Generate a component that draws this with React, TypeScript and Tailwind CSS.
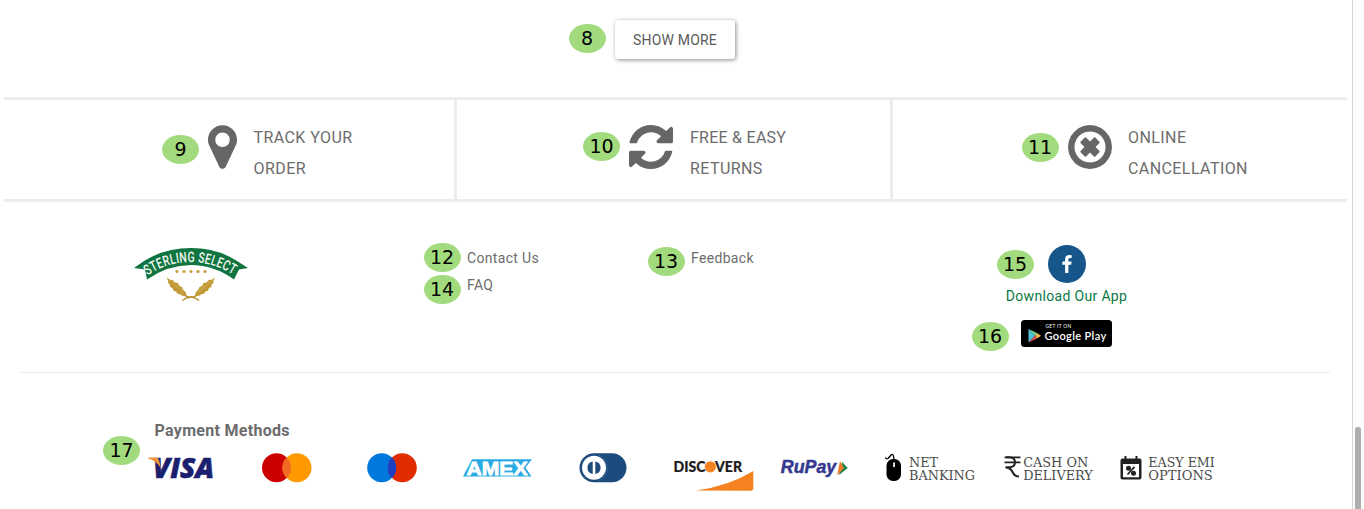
import React from "react";

type BadgeProps = { n: number; className: string };

function Badge({ n, className }: BadgeProps) {
  return (
    <span
      className={`absolute flex h-[29px] w-[37px] items-center justify-center rounded-[50%] bg-[#a2db7e] font-['DejaVu_Sans',sans-serif] text-[19px] leading-none tracking-normal text-black ${className}`}
    >
      {n}
    </span>
  );
}

function PinIcon() {
  return (
    <svg viewBox="0 128 1024 1536" className="h-[44px] w-[29px]" fill="currentColor">
      <path d="M768 640q0-106-75-181t-181-75-181 75-75 181 75 181 181 75 181-75 75-181zm256 0q0 109-33 179l-364 774q-16 33-47.5 52t-67.5 19-67.5-19-46.5-52l-365-774q-33-70-33-179 0-212 150-362t362-150 362 150 150 362z" />
    </svg>
  );
}

function RefreshIcon() {
  return (
    <svg viewBox="0 128 1536 1536" className="h-[44px] w-[44px]" fill="currentColor">
      <path d="M1511 1056q0 5-1 7-64 268-268 434.5t-478 166.5q-146 0-282.5-55t-243.5-157l-129 129q-19 19-45 19t-45-19-19-45v-448q0-26 19-45t45-19h448q26 0 45 19t19 45-19 45l-137 137q71 66 161 102t187 36q134 0 250-65t186-179q11-17 53-117 8-23 30-23h192q13 0 22.5 9.5t9.5 22.5zm25-800v448q0 26-19 45t-45 19h-448q-26 0-45-19t-19-45 19-45l138-138q-148-137-349-137-134 0-250 65t-186 179q-11 17-53 117-8 23-30 23h-199q-13 0-22.5-9.5t-9.5-22.5v-7q65-268 270-434.5t480-166.5q146 0 284 55.5t245 156.5l130-129q19-19 45-19t45 19 19 45z" />
    </svg>
  );
}

function CancelIcon() {
  return (
    <svg viewBox="0 128 1536 1536" className="h-[44px] w-[44px]" fill="currentColor">
      <path d="M1097 1079l-146 146q-10 10-23 10t-23-10l-137-137-137 137q-10 10-23 10t-23-10l-146-146q-10-10-10-23t10-23l137-137-137-137q-10-10-10-23t10-23l146-146q10-10 23-10t23 10l137 137 137-137q10-10 23-10t23 10l146 146q10 10 10 23t-10 23l-137 137 137 137q10 10 10 23t-10 23zm215-183q0-148-73-273t-198-198-273-73-273 73-198 198-73 273 73 273 198 198 273 73 273-73 198-198 73-273zm224 0q0 209-103 385.5t-279.5 279.5-385.5 103-385.5-103-279.5-279.5-103-385.5 103-385.5 279.5-279.5 385.5-103 385.5 103 279.5 279.5 103 385.5z" />
    </svg>
  );
}

function Wheat() {
  return (
    <g>
      <path d="M63 59 Q67 62.500 71 62 Q76 62.500 79 65.500" fill="none" stroke="#b98f2c" strokeWidth="1.300" />
      <path
        d="M46.500 42.500 L50.500 45 L52.500 44.800 L55 47.500 L58 48 L59.800 51.200 L62 52 L63.500 55.300 L65.500 57 L67 61.500 L62.500 60.800 L60 59.200 L57.500 58.800 L56 56.500 L53.500 55.800 L52.500 53 L50 52 L50 49.500 L48 48 L48.200 46 Z"
        fill="#c19a35"
      />
      <path d="M49 45 L64 59 M53 45.500 L53.500 49 M57.500 49 L58 53 M61.500 53 L62 57" fill="none" stroke="#d9bd74" strokeWidth="0.400" />
    </g>
  );
}

function SterlingLogo() {
  return (
    <svg viewBox="120 235 140 75" className="h-[75px] w-[140px] overflow-visible">
      <path
        d="M134 268 L144 261 Q165 248 191 248 Q217 248 237 261 L248 268 L239 269.500 L234 279.500 Q214 265 191 265 Q168 265 147 279.500 L145 269.500 Z"
        fill="#0f7440"
      />
      <path id="ribbon" d="M147.500 275.500 Q167 262 191 262 Q215 262 240 279" fill="none" />
      <text fontFamily="Roboto, sans-serif" fontSize="14.500" fontWeight="500" fill="#f4f8f1">
        <textPath href="#ribbon" textLength="91" lengthAdjust="spacingAndGlyphs">
          STERLING SELECT
        </textPath>
      </text>
      <g fill="#c79d36">
        <circle cx="177" cy="271.500" r="1.600" />
        <circle cx="184" cy="271.500" r="1.600" />
        <circle cx="191" cy="271.500" r="1.600" />
        <circle cx="198" cy="271.500" r="1.600" />
        <circle cx="205" cy="271.500" r="1.600" />
      </g>
      <g transform="translate(120 235)">
        <Wheat />
      </g>
      <g transform="translate(261.500 235) scale(-1 1)">
        <Wheat />
      </g>
    </svg>
  );
}

function GooglePlay() {
  return (
    <svg viewBox="0 0 91 27" className="h-[27px] w-[91px] overflow-visible">
      <rect width="91" height="27" rx="3.500" fill="#000" />
      <path d="M7.500 9 L14 15.700 L7.500 22.500 Z" fill="#4fc3d9" />
      <path d="M7.500 9 L16.500 13.300 L14 15.700 Z" fill="#6fcf97" />
      <path d="M7.500 22.500 L16.500 18.200 L14 15.700 Z" fill="#e8505b" />
      <path d="M16.500 13.300 L20 15.700 L16.500 18.200 L14 15.700 Z" fill="#f3b64b" />
      <text x="24.500" y="7.500" fontFamily="Lato, sans-serif" fontSize="5.200" fill="#fff" textLength="26" lengthAdjust="spacingAndGlyphs">
        GET IT ON
      </text>
      <text x="23.500" y="19.500" fontFamily="Lato, sans-serif" fontWeight="600" fontSize="11.500" fill="#fff" textLength="62" lengthAdjust="spacingAndGlyphs">
        Google Play
      </text>
    </svg>
  );
}

function Visa() {
  return (
    <svg viewBox="147 450 68 44" className="h-[44px] w-[68px] shrink-0 overflow-visible">
      <text x="153" y="478" fontFamily="'Open Sans', sans-serif" fontWeight="800" fontStyle="italic" fontSize="28" fill="#1b1f6f" stroke="#1b1f6f" strokeWidth="0.600" textLength="61" lengthAdjust="spacingAndGlyphs">
        VISA
      </text>
      <path d="M148 457.500 H156 Q158.500 457.500 159 460 L161 468.500 Q157 461 148 458.500 Z" fill="#e9963a" />
    </svg>
  );
}

function Mastercard() {
  return (
    <svg viewBox="262 450 50 44" className="ml-[47px] h-[44px] w-[50px] shrink-0">
      <circle cx="276.500" cy="467.700" r="14.500" fill="#cc0000" />
      <circle cx="297" cy="467.700" r="14.500" fill="#ff9900" />
      <path d="M286.750 457.400 A14.500 14.500 0 0 1 286.750 478 A14.500 14.500 0 0 1 286.750 457.400" fill="#f26b25" />
    </svg>
  );
}

function Maestro() {
  return (
    <svg viewBox="367 450 50 44" className="ml-[55px] h-[44px] w-[50px] shrink-0">
      <circle cx="381.700" cy="467.700" r="14.500" fill="#0079df" />
      <circle cx="402.300" cy="467.700" r="14.500" fill="#e12c00" />
      <path d="M392 457.400 A14.500 14.500 0 0 1 392 478 A14.500 14.500 0 0 1 392 457.400" fill="#1c3fc4" />
    </svg>
  );
}

function Amex() {
  return (
    <svg viewBox="462 450 72 44" className="ml-[45px] h-[44px] w-[72px] shrink-0 overflow-visible">
      <path d="M463 476.500 L472 459.300 H532 L525.500 467.500 L531.500 476.500 Z" fill="#29abe2" />
      <text x="466.500" y="474.600" fontFamily="'Liberation Sans', sans-serif" fontWeight="700" fontSize="18.500" fill="#fff" stroke="#fff" strokeWidth="0.800" textLength="61" lengthAdjust="spacingAndGlyphs">
        AMEX
      </text>
    </svg>
  );
}

function Diners() {
  return (
    <svg viewBox="579 450 48 44" className="ml-[45px] h-[44px] w-[48px] shrink-0">
      <rect x="579.500" y="453.300" width="47" height="29" rx="14.500" fill="#1d4b7d" />
      <path d="M599 455 A14 14 0 0 1 599 480.600" fill="none" stroke="#456d99" strokeWidth="0.600" />
      <circle cx="594" cy="467.800" r="12" fill="#fff" />
      <path d="M592.700 461.500 A6.400 6.400 0 0 0 592.700 474.100 Z M595.300 461.500 A6.400 6.400 0 0 1 595.300 474.100 Z" fill="#1d4b7d" />
    </svg>
  );
}

function Discover() {
  return (
    <svg viewBox="673 450 81 44" className="ml-[46px] h-[44px] w-[81px] shrink-0 overflow-visible">
      <g fontFamily="Lato, sans-serif" fontWeight="900" fontSize="14.500" fill="#1d1b1c" stroke="#1d1b1c" strokeWidth="0.200">
        <text x="673.500" y="472" textLength="32" lengthAdjust="spacingAndGlyphs">DISC</text>
        <text x="715" y="472" textLength="27" lengthAdjust="spacingAndGlyphs">VER</text>
      </g>
      <circle cx="710.300" cy="466.800" r="5.600" fill="#f58220" />
      <path d="M696 490.500 Q729 486 753.300 471 V488.500 Q753.300 490.800 751 490.800 Z" fill="#f58220" />
    </svg>
  );
}

function Rupay() {
  return (
    <svg viewBox="780 450 69 44" className="ml-[26px] h-[44px] w-[69px] shrink-0 overflow-visible">
      <text x="780.800" y="473" fontFamily="'Liberation Sans', sans-serif" fontWeight="700" fontStyle="italic" fontSize="18" fill="#343890" stroke="#343890" strokeWidth="0.500" textLength="55.500" lengthAdjust="spacingAndGlyphs">
        RuPay
      </text>
      <path d="M842 462 L847.800 468 L839 475 Z" fill="#168543" />
      <path d="M840 461 L844 468 L837 475.500 Z" fill="#f47a2d" />
    </svg>
  );
}

type CaptionProps = { x: number; a: string; aw: number; b: string; bw: number };

function Caption({ x, a, aw, b, bw }: CaptionProps) {
  return (
    <g fontFamily="'DejaVu Serif', serif" fontSize="13.300" fill="#4b4b4b">
      <text x={x} y="467" textLength={aw} lengthAdjust="spacingAndGlyphs">{a}</text>
      <text x={x} y="480" textLength={bw} lengthAdjust="spacingAndGlyphs">{b}</text>
    </g>
  );
}

function NetBanking() {
  return (
    <svg viewBox="884 450 92 44" className="ml-[35px] h-[44px] w-[92px] shrink-0 overflow-visible">
      <path d="M885.500 457.500 Q886 459.500 888 458.500 Q889.500 457 891 455 Q893 453.500 893.500 456 L894 460" fill="none" stroke="#000" strokeWidth="1.300" />
      <rect x="886.500" y="459" width="14.500" height="22" rx="6.500" fill="#000" />
      <rect x="893.200" y="462.300" width="1.700" height="5" rx="0.800" fill="#fff" />
      <Caption x={909} a="NET" aw={29} b="BANKING" bw={66} />
    </svg>
  );
}

function CashOnDelivery() {
  return (
    <svg viewBox="1003 450 91 44" className="ml-[27px] h-[44px] w-[91px] shrink-0 overflow-visible">
      <path d="M1004.500 457.300 H1020.500 M1004.500 462.300 H1020.500" fill="none" stroke="#222" strokeWidth="1.700" />
      <path d="M1006 457.300 H1009 Q1015 457.500 1015 462.300 Q1015 467.200 1009 467.300 H1005.500 Q1010 467.800 1012 471 Q1014.500 476.800 1019 476.500" fill="none" stroke="#222" strokeWidth="2" />
      <Caption x={1023.200} a="CASH ON" aw={65} b="DELIVERY" bw={69.500} />
    </svg>
  );
}

function EasyEmi() {
  return (
    <svg viewBox="1120 450 97 44" className="ml-[26px] h-[44px] w-[97px] shrink-0 overflow-visible">
      <path d="M1122.500 458.500 H1139.500 Q1141.500 458.500 1141.500 460.500 V477.500 Q1141.500 479.500 1139.500 479.500 H1122.500 Q1120.500 479.500 1120.500 477.500 V460.500 Q1120.500 458.500 1122.500 458.500 Z M1123 464 V477.300 H1139 V464 Z" fill="#222" fillRule="evenodd" />
      <path d="M1125.500 456 V460 M1136.500 456 V460" stroke="#222" strokeWidth="2" />
      <circle cx="1128.500" cy="468.300" r="2.500" fill="#222" />
      <circle cx="1133.500" cy="473.300" r="2.500" fill="#222" />
      <path d="M1127.500 474.500 L1134.500 466.800" stroke="#222" strokeWidth="1.800" />
      <Caption x={1148.300} a="EASY EMI" aw={66.500} b="OPTIONS" bw={64.500} />
    </svg>
  );
}

export default function App() {
  return (
    <div className="flex h-[509px] w-[1364px] overflow-hidden bg-white font-['Roboto',sans-serif] text-[#6c6c6c]">
      <main className="flex w-[1353px] shrink-0 flex-col border-r border-[#d5d5d5]">
        <section className="flex h-[97px] pt-[20px] pl-[615px]">
          <div className="relative h-[39px]">
            <Badge n={8} className="top-[4px] -left-[46.5px]" />
            <button className="h-[39px] w-[120px] rounded-[3px] bg-white pt-[2px] text-[14px] tracking-[0.2px] text-[#5a5a5a] shadow-[1px_1px_4px_rgba(0,0,0,0.45)]">
              SHOW MORE
            </button>
          </div>
        </section>

        <section className="ml-[4px] flex h-[105px] w-[1343px] border-y-[3px] border-[#ededed] text-[16px] leading-[31px] tracking-[0.42px]">
          <div className="relative flex w-[453px] gap-[16.5px] border-r-[3px] border-[#ededed] pt-[22px] pl-[204px]">
            <Badge n={9} className="top-[35px] left-[158px]" />
            <div className="pt-[3px] text-[#666]"><PinIcon /></div>
            <div>TRACK YOUR<br />ORDER</div>
          </div>
          <div className="relative flex w-[436px] gap-[17px] border-r-[3px] border-[#ededed] pt-[22px] pl-[172px]">
            <Badge n={10} className="top-[31.5px] left-[126px]" />
            <div className="pt-[3px] text-[#666]"><RefreshIcon /></div>
            <div><span className="tracking-[0.25px]">FREE &amp; EASY</span><br />RETURNS</div>
          </div>
          <div className="relative flex flex-1 gap-[16px] pt-[22px] pl-[175px]">
            <Badge n={11} className="top-[33px] left-[128.5px]" />
            <div className="pt-[3px] text-[#666]"><CancelIcon /></div>
            <div>ONLINE<br />CANCELLATION</div>
          </div>
        </section>

        <section className="mx-[20px] flex h-[171px] w-[1310px] border-b border-[#ededed] text-[14px] tracking-[0.33px]">
          <div className="w-[447px] pt-[33px] pl-[100px]">
            <SterlingLogo />
          </div>
          <div className="relative w-[224px] pt-[43px] leading-[27px]">
            <Badge n={12} className="top-[40.5px] -left-[43.5px]" />
            <Badge n={14} className="top-[73px] -left-[43.5px]" />
            <div>Contact Us</div>
            <div>FAQ</div>
          </div>
          <div className="relative w-[305px] pt-[43px] leading-[27px]">
            <Badge n={13} className="top-[44.5px] -left-[43.5px]" />
            <div>Feedback</div>
          </div>
          <div className="relative flex w-[141px] flex-col items-center pt-[43px]">
            <Badge n={15} className="top-[48px] left-[0.5px]" />
            <Badge n={16} className="top-[119.5px] -left-[24.5px]" />
            <div className="flex h-[38px] w-[38px] items-center justify-center rounded-full bg-[#16568a]">
              <svg viewBox="479 0 864 1664" className="h-[18px] w-[10px]" fill="#fff">
                <path d="M1343 12v264h-157q-86 0-116 36t-30 108v189h293l-39 296h-254v759h-306v-759h-255v-296h255v-218q0-186 104-288.5t277-102.5q147 0 228 12z" />
              </svg>
            </div>
            <div className="mt-[3px] leading-[20px] text-[#0c7a45]">Download Our App</div>
            <div className="mt-[14px]"><GooglePlay /></div>
          </div>
        </section>

        <section className="pt-[47px] pl-[147px]">
          <div className="relative pl-[7.5px]">
            <Badge n={17} className="top-[16px] -left-[44px]" />
            <h2 className="h-[30px] text-[16px] leading-[22px] font-bold tracking-[0.3px]">Payment Methods</h2>
          </div>
          <div className="flex h-[44px]">
            <Visa />
            <Mastercard />
            <Maestro />
            <Amex />
            <Diners />
            <Discover />
            <Rupay />
            <NetBanking />
            <CashOnDelivery />
            <EasyEmi />
          </div>
        </section>
      </main>
      <aside className="flex flex-1 flex-col bg-[#fcfcfc] pt-[427px] pl-[2px]">
        <div className="h-[82px] w-[6px] rounded-t-full bg-[#adadad]" />
      </aside>
    </div>
  );
}
